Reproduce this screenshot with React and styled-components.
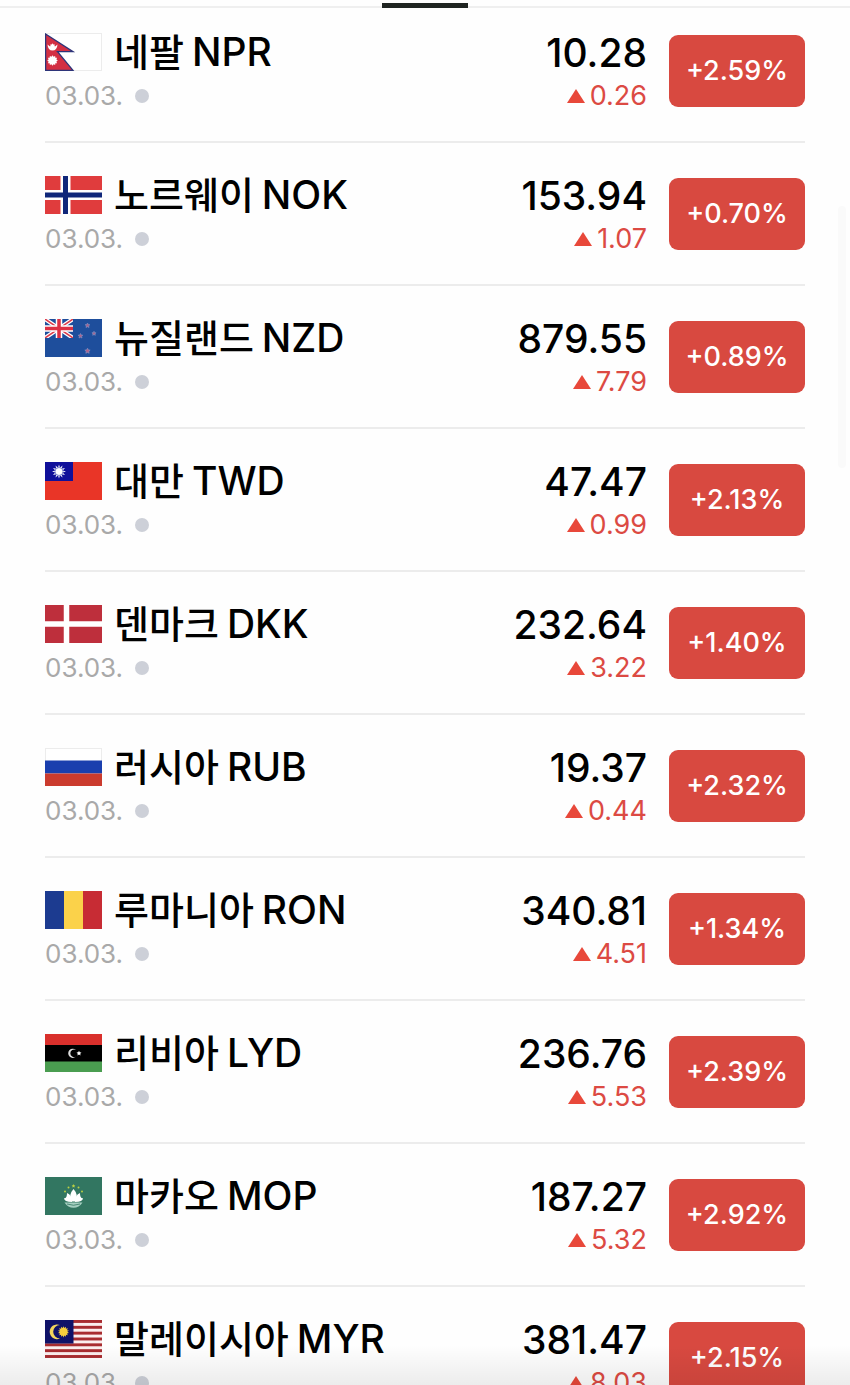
import React from 'react'
import styled, { createGlobalStyle } from 'styled-components'

const GlobalStyle = createGlobalStyle`
  * {
    box-sizing: border-box;
  }
  body {
    margin: 0;
    background-color: #fefefe;
    font-family: 'Inter', 'Noto Sans CJK KR', sans-serif;
  }
`

const Screen = styled.div`
  position: relative;
  display: flex;
  flex-direction: column;
  height: 100vh;
  overflow: hidden;
`

/* bottom edge of the tab strip */
const TabStrip = styled.div`
  flex: none;
  display: flex;
  justify-content: center;
  align-items: flex-end;
  height: 8px;
  border-bottom: 2px solid #efefef;
`

const ActiveTab = styled.div`
  width: 86px;
  height: 5px;
  margin-bottom: -2px;
  background-color: #1f2421;
`

const List = styled.ul`
  flex: 1;
  min-height: 0;
  margin: 0;
  padding: 0 45px;
  list-style: none;
  overflow-y: auto;
  scrollbar-width: none;
`

const Row = styled.li`
  display: flex;
  align-items: center;
  gap: 22px;
  height: 143px;
  border-bottom: 2px solid #ececec;

  &:first-child {
    height: 135px;
    padding-bottom: 8px;
  }
`

const Info = styled.div`
  flex: 1;
  display: flex;
  flex-direction: column;
  gap: 9px;
  padding-top: 3px;
`

const Title = styled.h2`
  display: flex;
  align-items: center;
  gap: 12px;
  height: 38px;
  margin: 0;
  font-size: 39px;
  font-weight: 500;
  color: #000;
`

const Flag = styled.svg`
  flex: none;
  width: 57px;
  height: 38px;
`

const Label = styled.span`
  display: flex;
  align-items: baseline;
  gap: 8px;
  line-height: 40px;
`

const Name = styled.span`
  font-size: 38px;
`

const Meta = styled.div`
  display: flex;
  align-items: center;
  gap: 12px;
  height: 32px;
  font-size: 26px;
  color: #a9a9a9;
`

const Dot = styled.span`
  width: 14px;
  height: 14px;
  border-radius: 50%;
  background-color: #cdd0d8;
`

const Rate = styled.div`
  display: flex;
  flex-direction: column;
  align-items: flex-end;
  gap: 9px;
  padding-top: 3px;
`

const Price = styled.strong`
  height: 38px;
  line-height: 40px;
  font-size: 39px;
  font-weight: 500;
  color: #000;
`

const Change = styled.span`
  display: flex;
  align-items: center;
  gap: 5px;
  height: 32px;
  font-size: 27px;
  color: #dc4a43;
`

const Arrow = styled.svg`
  width: 18px;
  height: 14px;
  fill: #e8483a;
`

const Badge = styled.span`
  display: flex;
  align-items: center;
  justify-content: center;
  width: 136px;
  height: 72px;
  border-radius: 9px;
  background-color: #d84940;
  color: #fff;
  font-size: 27px;
  font-weight: 500;
`

const ScrollThumb = styled.div`
  position: absolute;
  top: 206px;
  right: 4px;
  width: 8px;
  height: 262px;
  border-radius: 4px;
  background-color: #fafafa;
`

const Fade = styled.div`
  position: absolute;
  left: 0;
  right: 0;
  bottom: 0;
  height: 40px;
  background: linear-gradient(rgba(0, 0, 0, 0), rgba(0, 0, 0, 0.07));
  pointer-events: none;
`

// points of a star / sun centred on cx, cy
const star = (cx, cy, outer, inner, tips) =>
  Array.from({ length: tips * 2 }, (_, i) => {
    const r = i % 2 ? inner : outer
    const a = (Math.PI * i) / tips - Math.PI / 2
    return `${(cx + r * Math.cos(a)).toFixed(2)},${(cy + r * Math.sin(a)).toFixed(2)}`
  }).join(' ')

// all the flags are drawn on a 57 x 38 box
const flags = {
  NPR: (
    <>
      <rect x="0.5" y="0.5" width="56" height="37" fill="#fff" stroke="#ececec" />
      <path d="M0.6 1 L28 18.7 H12.5 L28 37.4 H0.6Z" fill="#d32f43" stroke="#2d3479" strokeWidth="1.3" />
      <path d="M2.5 11.5 Q7.5 17 12.5 11.5 Q12 17.5 7.5 17.5 Q3 17.5 2.5 11.5Z" fill="#fff" />
      <polygon points={star(7.5, 13.3, 3, 2, 8)} fill="#fff" />
      <polygon points={star(7.5, 27.5, 5.3, 4, 12)} fill="#fff" />
    </>
  ),
  NOK: (
    <>
      <rect width="57" height="38" fill="#e03c3d" />
      <path d="M20.5 0V38M0 19H57" stroke="#fff" strokeWidth="10" />
      <path d="M20.5 0V38M0 19H57" stroke="#10277a" strokeWidth="5" />
    </>
  ),
  NZD: (
    <>
      <rect width="57" height="38" fill="#1e4e9c" />
      <svg width="28" height="19" viewBox="0 0 28 19">
        <path d="M0 0L28 19M28 0L0 19" stroke="#fff" strokeWidth="4" />
        <path d="M0 0L28 19M28 0L0 19" stroke="#dd3b4b" strokeWidth="1.5" />
        <path d="M14 0V19M0 9.5H28" stroke="#fff" strokeWidth="6.5" />
        <path d="M14 0V19M0 9.5H28" stroke="#dd3044" strokeWidth="3.5" />
      </svg>
      <g fill="#b0608a" stroke="#7f8fc0" strokeWidth="0.7">
        <polygon points={star(42.5, 6.5, 2.5, 1.2, 5)} />
        <polygon points={star(35.5, 17, 2.5, 1.2, 5)} />
        <polygon points={star(49, 14.5, 2.2, 1, 5)} />
        <polygon points={star(42.5, 32, 2.8, 1.4, 5)} />
      </g>
    </>
  ),
  TWD: (
    <>
      <rect width="57" height="38" fill="#e93527" />
      <rect width="28" height="19" fill="#10109a" />
      <polygon points={star(14, 9.5, 7, 3.8, 12)} fill="#fff" />
      <circle cx="14" cy="9.5" r="4" fill="#fff" stroke="#5c66c0" strokeWidth="0.8" />
    </>
  ),
  DKK: (
    <>
      <rect width="57" height="38" fill="#be2f3c" />
      <path d="M21.5 0V38M0 19H57" stroke="#fff" strokeWidth="5.5" />
    </>
  ),
  RUB: (
    <>
      <rect x="0.5" y="0.5" width="56" height="37" fill="#fff" stroke="#ececec" />
      <rect y="12.5" width="57" height="13" fill="#1a3fae" />
      <rect y="25.5" width="57" height="12.5" fill="#cb3b2e" />
    </>
  ),
  RON: (
    <>
      <rect width="19" height="38" fill="#1c3b90" />
      <rect x="19" width="19" height="38" fill="#fbd24a" />
      <rect x="38" width="19" height="38" fill="#c72c34" />
    </>
  ),
  LYD: (
    <>
      <rect width="57" height="38" fill="#000" />
      <rect width="57" height="11" fill="#d9302c" />
      <rect y="27.5" width="57" height="10.5" fill="#4a9d50" />
      <path d="M31 16 A4.6 4.6 0 1 0 31 22.6 A3.8 3.8 0 1 1 31 16Z" fill="#ddd" />
      <polygon points={star(34, 19.3, 2.6, 1.3, 5)} fill="#fff" />
    </>
  ),
  MOP: (
    <>
      <rect width="57" height="38" fill="#327661" />
      <path d="M28.5 12 Q34 18 30.5 24.5 H26.5 Q23 18 28.5 12Z" fill="#fff" />
      <path d="M22 16 Q27 18 27 25 Q19 25 19 21 Q22 22 22 16Z M35 16 Q30 18 30 25 Q38 25 38 21 Q35 22 35 16Z" fill="#fff" />
      <path d="M19.5 25.5 H37.5 Q34 30.8 28.5 30.8 Q23 30.8 19.5 25.5Z" fill="#a5cfc1" />
      <path d="M22 27 Q28.5 29.5 35 27" stroke="#327661" strokeWidth="0.8" fill="none" />
      <g fill="#b9cf43">
        <polygon points={star(28.5, 9, 2, 1, 5)} />
        <circle cx="23.5" cy="10.5" r="1" />
        <circle cx="33.5" cy="10.5" r="1" />
        <circle cx="20" cy="14.5" r="1" />
        <circle cx="37" cy="14.5" r="1" />
      </g>
    </>
  ),
  MYR: (
    <>
      <rect width="57" height="38" fill="#fbeeee" />
      {[0, 1, 2, 3, 4, 5, 6].map((i) => (
        <rect key={i} y={i * 5.84} width="57" height="2.92" fill="#a82c30" />
      ))}
      <rect width="28.5" height="23.5" fill="#0f1268" />
      <path d="M15 5 A7.4 7.4 0 1 0 15 18.6 A6.6 6.6 0 1 1 15 5Z" fill="#f3d65c" />
      <polygon points={star(18.5, 11.8, 5.6, 3.8, 14)} fill="#f7cf3c" />
    </>
  ),
}

const currencies = [
  { name: '네팔', code: 'NPR', price: '10.28', change: '0.26', percent: '+2.59%' },
  { name: '노르웨이', code: 'NOK', price: '153.94', change: '1.07', percent: '+0.70%' },
  { name: '뉴질랜드', code: 'NZD', price: '879.55', change: '7.79', percent: '+0.89%' },
  { name: '대만', code: 'TWD', price: '47.47', change: '0.99', percent: '+2.13%' },
  { name: '덴마크', code: 'DKK', price: '232.64', change: '3.22', percent: '+1.40%' },
  { name: '러시아', code: 'RUB', price: '19.37', change: '0.44', percent: '+2.32%' },
  { name: '루마니아', code: 'RON', price: '340.81', change: '4.51', percent: '+1.34%' },
  { name: '리비아', code: 'LYD', price: '236.76', change: '5.53', percent: '+2.39%' },
  { name: '마카오', code: 'MOP', price: '187.27', change: '5.32', percent: '+2.92%' },
  { name: '말레이시아', code: 'MYR', price: '381.47', change: '8.03', percent: '+2.15%' },
]

const App = () => {
  return (
    <>
      <GlobalStyle />
      <Screen>
        <TabStrip><ActiveTab /></TabStrip>
        <List>
          {currencies.map((c) => (
            <Row key={c.code}>
              <Info>
                <Title>
                  <Flag viewBox="0 0 57 38" aria-hidden="true">{flags[c.code]}</Flag>
                  <Label><Name>{c.name}</Name> {c.code}</Label>
                </Title>
                <Meta>03.03.<Dot /></Meta>
              </Info>
              <Rate>
                <Price>{c.price}</Price>
                <Change>
                  <Arrow viewBox="0 0 18 14" aria-hidden="true"><path d="M9 0L18 14H0Z" /></Arrow>
                  {c.change}
                </Change>
              </Rate>
              <Badge>{c.percent}</Badge>
            </Row>
          ))}
        </List>
        <ScrollThumb />
        <Fade />
      </Screen>
    </>
  )
}

export default App
